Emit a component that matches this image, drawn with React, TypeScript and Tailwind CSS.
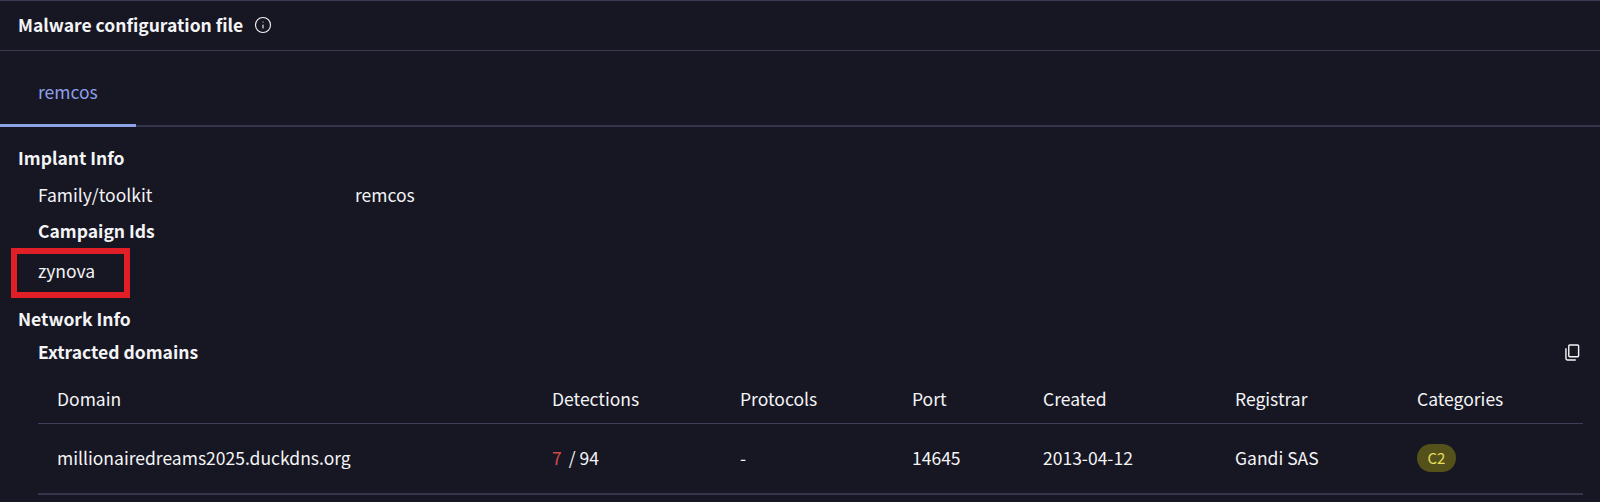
import { Info } from 'lucide-react';

const font = { fontFamily: '"Noto Sans CJK JP", "Noto Sans", sans-serif' };

function CopyIcon() {
  return (
    <svg width="15" height="17" viewBox="0 0 16 18" fill="none" stroke="currentColor" strokeWidth="1.5">
      <rect x="4" y="1" width="10.5" height="12.5" rx="1" />
      <path d="M1 4.5V15.5C1 16.3 1.7 17 2.5 17H11.5" />
    </svg>
  );
}

function App() {
  return (
    <div
      className="h-[502px] w-[1600px] overflow-hidden bg-[#171723] text-[17.5px] leading-[24px] text-[#f4f4f6]"
      style={font}
    >
      <div className="flex h-[51px] items-center gap-[11px] border-y border-[#3a3a50] pb-[2px] pl-[18px]">
        <span className="font-bold">Malware configuration file</span>
        <Info size={18} strokeWidth={1.5} />
      </div>

      <div className="flex h-[76px] border-b-2 border-[#34344c]">
        <div className="mb-[-2px] flex w-[136px] items-center border-b-[3px] border-[#8ea3e6] pl-[38px] pt-[8px] text-[#8f9fe8]">
          remcos
        </div>
      </div>

      <div className="pl-[18px] pt-[19px]">
        <div className="font-bold">Implant Info</div>
        <div className="mt-[13px] flex pl-[20px]">
          <span className="w-[317px]">Family/toolkit</span>
          <span>remcos</span>
        </div>
        <div className="mt-[12px] pl-[20px] font-bold">Campaign Ids</div>
        <div className="relative mt-[16px] pl-[20px]">
          zynova
          <div className="absolute left-[-7px] top-[-11px] h-[50px] w-[119px] border-[6px] border-[#e01f26]" />
        </div>
        <div className="mt-[24px] font-bold">Network Info</div>
      </div>

      <div className="pl-[38px] pr-[17px] pt-[9px]">
        <div className="flex items-center justify-between">
          <span className="font-bold">Extracted domains</span>
          <span className="mr-[3px]">
            <CopyIcon />
          </span>
        </div>
        <table className="mt-[11px] w-full table-fixed text-left">
          <thead>
            <tr className="h-[48px] border-b border-[#3c3f5a]">
              <th className="w-[495px] pl-[19px] font-normal">Domain</th>
              <th className="w-[188px] pl-[19px] font-normal">Detections</th>
              <th className="w-[172px] pl-[19px] font-normal">Protocols</th>
              <th className="w-[131px] pl-[19px] font-normal">Port</th>
              <th className="w-[192px] pl-[19px] font-normal">Created</th>
              <th className="w-[182px] pl-[19px] font-normal">Registrar</th>
              <th className="pl-[19px] font-normal">Categories</th>
            </tr>
          </thead>
          <tbody>
            <tr className="h-[71px] border-b-2 border-[#34344c]">
              <td className="pl-[19px]">millionairedreams2025.duckdns.org</td>
              <td className="pl-[19px]">
                <span className="mr-[7px] text-[#d0494b]">7</span>/<span className="ml-[4px]">94</span>
              </td>
              <td className="pl-[19px]">-</td>
              <td className="pl-[19px]">14645</td>
              <td className="pl-[19px]">2013-04-12</td>
              <td className="pl-[19px]">Gandi SAS</td>
              <td className="pl-[19px]">
                <span className="inline-flex h-[28px] w-[39px] items-center justify-center rounded-full bg-[#54521a] text-[15px] text-[#e6dc5c]">
                  C2
                </span>
              </td>
            </tr>
          </tbody>
        </table>
      </div>
    </div>
  );
}

export default App;
